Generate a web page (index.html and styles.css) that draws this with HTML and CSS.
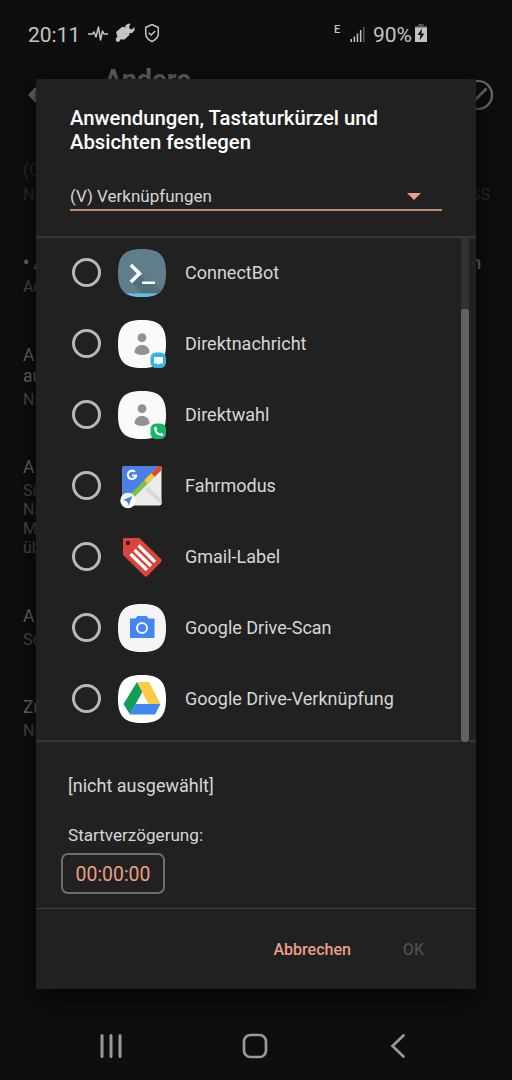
FILE: index.html
```
<!DOCTYPE html>
<html lang="de">

<head>
    <meta charset="UTF-8">
    <meta name="viewport" content="width=device-width, initial-scale=1.0">
    <title>Andere</title>
    <link rel="stylesheet" href="styles.css">
</head>

<body>
    <div class="screen">
        <!-- status bar -->
        <div class="status">
            <span class="time">20:11</span>
            <svg class="pulse" width="20" height="16" viewBox="0 0 20 16" fill="none" stroke="#c4c4c4" stroke-width="1.5" stroke-linejoin="round">
                <path d="M0 8h4.500l1.500-2 2 5L10.500 1l2 13 2-9 1.500 3h4" />
            </svg>
            <svg class="plug" width="20" height="20" viewBox="0 0 20 20" fill="#c4c4c4">
                <path d="M1 9L7 4 9.500 4 14 8.500 14.500 12 9.500 16.500 5 16.500 4.500 18.500 2.500 19 .8 17.500 1 15 2.500 14z" />
                <path d="M10 5.500l.5-3L13 .7l2.500 0-1.500 3 .8 2 2 .7L19.300 4l.2 3.500-2.500 2.500-3 .3z" />
            </svg>
            <svg class="shield" width="16" height="20" viewBox="0 0 16 20" fill="none" stroke="#c4c4c4" stroke-width="1.5">
                <path d="M8 1.500l6.300 3v7Q13.500 16 8 18.500 2.500 16 1.700 11.500v-7z" stroke-linejoin="round" />
                <path d="M4.800 9.700L7.200 12l4-4" />
            </svg>
            <span class="edge">E</span>
            <svg class="signal" width="16" height="17" viewBox="0 0 16 17" fill="#c4c4c4">
                <path d="M.5 13h1.500v3H.5zM3.600 10.500h1.500V16H3.600zM6.700 7.500h1.500V16H6.700zM9.900 4h1.500v12H9.900z" />
                <path d="M13 1h1.500v15H13z" fill="#5a5a5a" />
            </svg>
            <span class="percent">90%</span>
            <svg class="battery" width="12" height="18" viewBox="0 0 12 18">
                <path d="M3.500 0h5v2H12v2H0V2h3.500z" fill="#555" />
                <path d="M0 3.500h12V18H0z" fill="#c4c4c4" />
                <path d="M7 4.500L2.500 11h3L4.500 16.500 9.500 9.500H6.500z" fill="#0e0e0e" />
            </svg>
        </div>

        <!-- settings page behind the dialog -->
        <div class="toolbar">
            <svg width="20" height="20" viewBox="0 0 20 20" fill="none" stroke="#6f6f6f" stroke-width="3.5">
                <path d="M9.500 3.500L3.500 10l6 6.500M4 10h15" />
            </svg>
            <h1>Andere</h1>
            <svg width="32" height="32" viewBox="0 0 32 32" fill="none" stroke="#6f6f6f" stroke-width="2.2">
                <circle cx="16" cy="16" r="14" />
                <path d="M9 17l4 4L24.500 9.500" stroke-width="2.8" />
            </svg>
        </div>
        <div class="settings">
            <div class="item off">
                <h2>(G</h2>
                <p class="ends"><span>N</span><span>SS</span></p>
            </div>
            <div class="item">
                <h2 class="ends bold"><span>• A</span><span>n</span></h2>
                <p>Au</p>
            </div>
            <div class="item">
                <h2>A<br>au</h2>
                <p>Ni</p>
            </div>
            <div class="item near">
                <h2>A</h2>
                <p>Si<br>Na<br>M<br>üb</p>
            </div>
            <div class="item">
                <h2>A</h2>
                <p>Sc</p>
            </div>
            <div class="item near">
                <h2>Zu</h2>
                <p>Ni</p>
            </div>
        </div>

        <!-- navigation bar -->
        <div class="nav">
            <svg width="24" height="26" viewBox="0 0 24 26" stroke="#999" stroke-width="3" stroke-linecap="round">
                <path d="M3 2.500v21M12 2.500v21M21 2.500v21" />
            </svg>
            <svg class="home" width="26" height="26" viewBox="0 0 26 26" fill="none" stroke="#999" stroke-width="2.7">
                <rect x="2" y="2" width="22" height="22" rx="6.5" />
            </svg>
            <svg width="16" height="26" viewBox="0 0 16 26" fill="none" stroke="#999" stroke-width="2.7" stroke-linecap="round">
                <path d="M13.500 2.500L2.500 13l11 10.500" />
            </svg>
        </div>

        <div class="dialog">
            <div class="head">
                <h3>Anwendungen, Tastaturkürzel und<br>Absichten festlegen</h3>
                <div class="spinner">
                    <span>(V) Verknüpfungen</span>
                    <i class="arrow"></i>
                </div>
            </div>

            <div class="body">
                <ul class="list">
                    <li>
                        <i class="radio"></i>
                        <svg class="icon" viewBox="0 0 48 48">
                            <clipPath id="sq"><path d="M24 0C41.500 0 48 6.500 48 24S41.500 48 24 48 0 41.500 0 24 6.500 0 24 0z" /></clipPath>
                            <g clip-path="url(#sq)">
                                <path d="M0 0h48v48H0z" fill="#607d8b" />
                                <path d="M22 25l7 7h8v3l9 9H24L13 33z" fill="#546f7c" />
                                <path d="M0 44.500h48V48H0z" fill="#62bfe8" />
                            </g>
                            <path d="M12.800 16l8.700 8.500-8.700 8.500" fill="none" stroke="#fff" stroke-width="3.6" />
                            <path d="M24 32.500h13V35H24z" fill="#fff" />
                        </svg>
                        <span>ConnectBot</span>
                    </li>
                    <li>
                        <i class="radio"></i>
                        <svg class="icon" viewBox="0 0 48 48">
                            <path d="M24 0C41.500 0 48 6.500 48 24S41.500 48 24 48 0 41.500 0 24 6.500 0 24 0z" fill="#fafafa" />
                            <circle cx="24" cy="17.700" r="4.400" fill="#929292" />
                            <path d="M16.500 32.500c0-5 3.500-7.500 7.500-7.500s7.500 2.500 7.500 7.500q-3 2.500-7.500 2.500t-7.500-2.500z" fill="#929292" />
                            <rect x="32.500" y="32.500" width="15.500" height="15.500" rx="5.500" fill="#34b3dd" />
                            <path d="M36 37h9v6.500h-3.500L39.500 45.500v-2H36z" fill="#fff" />
                        </svg>
                        <span>Direktnachricht</span>
                    </li>
                    <li>
                        <i class="radio"></i>
                        <svg class="icon" viewBox="0 0 48 48">
                            <path d="M24 0C41.500 0 48 6.500 48 24S41.500 48 24 48 0 41.500 0 24 6.500 0 24 0z" fill="#fafafa" />
                            <circle cx="24" cy="17.700" r="4.400" fill="#929292" />
                            <path d="M16.500 32.500c0-5 3.500-7.500 7.500-7.500s7.500 2.500 7.500 7.500q-3 2.500-7.500 2.500t-7.500-2.500z" fill="#929292" />
                            <rect x="32.500" y="32.500" width="15.500" height="15.500" rx="5.500" fill="#12b76a" />
                            <path d="M37 37q0 6.500 7.500 7" fill="none" stroke="#fff" stroke-width="2" />
                            <path d="M36 36.500l2-1 1.500 2.500-1.300 1.500zM42 43l1.200-1.300 2.500 1.500-1.200 2z" fill="#fff" />
                        </svg>
                        <span>Direktwahl</span>
                    </li>
                    <li>
                        <i class="radio"></i>
                        <svg class="icon" viewBox="0 0 48 48">
                            <clipPath id="map"><rect x="4.500" y="4" width="39" height="39.500" rx="2" /></clipPath>
                            <g clip-path="url(#map)">
                                <path d="M4 4h40v40H4z" fill="#ebebeb" />
                                <path d="M4 4h38L4 42z" fill="#4a80e8" />
                                <path d="M30 25l14 13v5L27 28z" fill="#d8d8d8" />
                                <path d="M10 38L44 4" stroke="#7fc243" stroke-width="5" />
                                <path d="M28 20L44 4" stroke="#fdc93a" stroke-width="5" />
                                <path d="M35 13L46 2" stroke="#e04433" stroke-width="5" />
                            </g>
                            <path d="M17 9.800a4.200 4.200 0 1 0 1.200 3.700h-4.200" fill="none" stroke="#fff" stroke-width="2.1" />
                            <circle cx="10" cy="38.500" r="7.700" fill="#fff" />
                            <path d="M14.500 34l-3.800 9.500-1.700-4-4-1.500z" fill="#4a80e8" />
                        </svg>
                        <span>Fahrmodus</span>
                    </li>
                    <li>
                        <i class="radio"></i>
                        <svg class="icon" viewBox="0 0 48 48">
                            <path d="M6 5h15.500L43 26q1.500 1.500 0 3L29.500 43q-1.500 1.500-3 0L5 22V6q0-1 1-1z" fill="#d9453a" />
                            <circle cx="10" cy="10" r="2" fill="#1c1010" />
                            <path d="M20.500 12.500L37 29M16.500 17l16.500 16M12.500 21L29 37" stroke="#fff" stroke-width="3.2" />
                        </svg>
                        <span>Gmail-Label</span>
                    </li>
                    <li>
                        <i class="radio"></i>
                        <svg class="icon" viewBox="0 0 48 48">
                            <path d="M24 0C41.500 0 48 6.500 48 24S41.500 48 24 48 0 41.500 0 24 6.500 0 24 0z" fill="#f5f5f5" />
                            <path d="M12 14.500h5.500l2-2.500h9l2 2.500h6V34H12z" fill="#4285f4" />
                            <circle cx="24" cy="24" r="5" fill="none" stroke="#f5f5f5" stroke-width="2" />
                        </svg>
                        <span>Google Drive-Scan</span>
                    </li>
                    <li>
                        <i class="radio"></i>
                        <svg class="icon" viewBox="0 0 48 48">
                            <path d="M24 0C41.500 0 48 6.500 48 24S41.500 48 24 48 0 41.500 0 24 6.500 0 24 0z" fill="#fff" />
                            <path d="M19 7l5.500 9.500L12 39.500 5.500 29z" fill="#109d58" />
                            <path d="M19 7h12l11.500 22H30.500z" fill="#fdcb41" />
                            <path d="M17.700 29h24.800L37 39.500H12z" fill="#4285f4" />
                        </svg>
                        <span>Google Drive-Verknüpfung</span>
                    </li>
                </ul>
                <div class="scrollbar"><div class="thumb"></div></div>
            </div>

            <div class="delay">
                <p class="selected">[nicht ausgewählt]</p>
                <p class="label">Startverzögerung:</p>
                <button class="timer">00:00:00</button>
            </div>

            <div class="actions">
                <button class="cancel">Abbrechen</button>
                <button class="ok" disabled>OK</button>
            </div>
        </div>
    </div>
</body>

</html>
```
FILE: styles.css
```
* {
    box-sizing: border-box;
    margin: 0;
    padding: 0;
}

body {
    background: #0e0e0e;
    font-family: Roboto, sans-serif;
    color: #d6d6d6;
}

svg {
    display: block;
    flex: none;
}

button {
    background: none;
    border: none;
    font-family: inherit;
}

.screen {
    position: relative;
    width: 512px;
    height: 1080px;
    overflow: hidden;
    display: flex;
    flex-direction: column;
}

/* status bar */
.status {
    height: 68px;
    padding-left: 28px;
    display: flex;
    align-items: center;
    font-size: 21px;
    color: #c4c4c4;
}

.time,
.percent {
    padding-top: 1px;
}

.time {
    width: 60px;
}

.plug {
    margin: -2px 0 0 7px;
}

.shield {
    margin: -2px 0 0 9px;
}

.edge {
    width: 6px;
    margin: -9px 10px 0 174px;
    font-size: 11px;
    font-weight: 500;
}

.percent {
    margin-left: 7px;
    width: 42px;
}

.battery {
    margin-top: -2px;
}

/* page in the background */
.toolbar {
    height: 54px;
    padding: 0 18px 0 27px;
    display: flex;
    align-items: center;
}

.toolbar h1 {
    flex: 1;
    height: 54px;
    padding-left: 57px;
    font-size: 27px;
    line-height: 24px;
    font-weight: 700;
    color: #626262;
}

.settings {
    flex: 1;
    padding: 38px 22px 0 23px;
    color: #505050;
}

.item {
    margin-top: 49px;
}

.item.near {
    margin-top: 48px;
}

.item h2 {
    font-size: 17.5px;
    font-weight: 400;
    line-height: 21px;
    color: #707070;
}

.item p {
    font-size: 16px;
    line-height: 19px;
    padding-top: 3px;
}

.item .ends {
    display: flex;
    justify-content: space-between;
}

.item .bold {
    font-weight: 700;
    padding-right: 9px;
}

.item.off {
    margin-top: 0;
}

.off h2,
.off p {
    color: #2c2c2c;
}

.off p {
    padding-top: 4px;
}

.nav {
    height: 68px;
    padding: 0 106px 0 99px;
    display: flex;
    align-items: center;
    justify-content: space-between;
}

.home {
    margin-right: 4px;
}

/* dialog, lies over the page */
.dialog {
    position: absolute;
    left: 36px;
    top: 79px;
    width: 440px;
    height: 910px;
    background: #212121;
    border-radius: 2px;
    box-shadow: 0 8px 26px #050505;
    display: flex;
    flex-direction: column;
}

.head {
    height: 159px;
    padding: 27px 34px 0;
    border-bottom: 2px solid #363636;
}

.head h3 {
    font-size: 20.3px;
    line-height: 24px;
    font-weight: 500;
    color: #fff;
    white-space: nowrap;
}

.spinner {
    height: 30px;
    margin-top: 27px;
    padding-right: 21px;
    border-bottom: 2px solid #c08c79;
    display: flex;
    align-items: center;
    justify-content: space-between;
    font-size: 17px;
}

.spinner span,
.arrow {
    margin-top: 2px;
}

.arrow {
    border: 7px solid transparent;
    border-top-color: #eb9f85;
    border-bottom: none;
}

.body {
    height: 504px;
    padding-right: 7px;
    border-bottom: 2px solid #363636;
    display: flex;
    justify-content: space-between;
}

.list {
    list-style: none;
    margin-top: -1px;
}

.list li {
    height: 71px;
    padding-left: 36px;
    display: flex;
    align-items: center;
    font-size: 18px;
}

.radio {
    width: 29px;
    height: 29px;
    border: 3px solid #b8b8b8;
    border-radius: 50%;
}

.icon {
    width: 48px;
    height: 48px;
    margin: 0 19px 0 17px;
}

.scrollbar {
    width: 8px;
    height: 504px;
    background: #313131;
    padding-top: 71px;
}

.thumb {
    height: 433px;
    background: #626262;
    border-radius: 2px 2px 4px 4px;
}

.delay {
    height: 167px;
    padding: 33px 25px 0;
    border-bottom: 1px solid #404040;
}

.selected {
    padding-left: 7px;
    font-size: 18px;
    line-height: 22px;
}

.label {
    margin-top: 27px;
    padding-left: 7px;
    font-size: 17.1px;
    line-height: 22px;
}

.timer {
    display: block;
    width: 104px;
    height: 41px;
    margin-top: 7px;
    padding-top: 2px;
    border: 2px solid #6e6e6e;
    border-radius: 7px;
    font-size: 19.4px;
    color: #eb9f85;
}

.actions {
    flex: 1;
    padding-right: 52px;
    display: flex;
    align-items: center;
    justify-content: flex-end;
}

.actions button {
    font-size: 16px;
    font-weight: 500;
}

.cancel {
    margin-right: 52px;
    color: #eb9f85;
}

.ok {
    color: #4d4d4d;
}
```
